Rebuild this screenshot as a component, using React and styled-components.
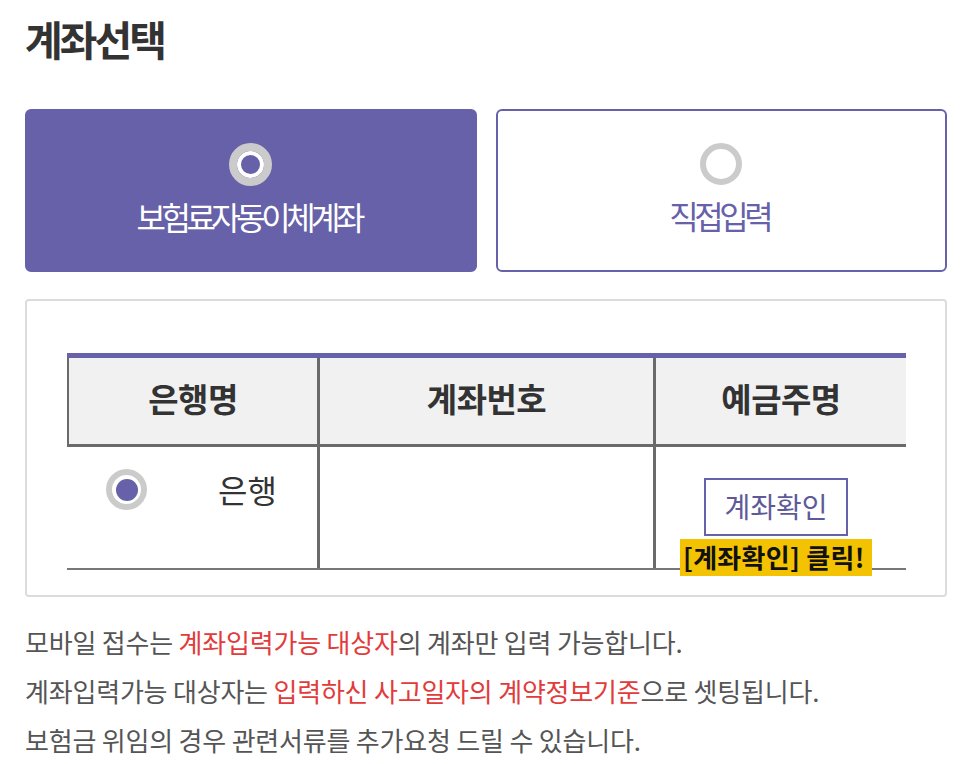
import React from "react";
import styled, { createGlobalStyle } from "styled-components";

const PURPLE = "#6661a8";
const FONT = `"Noto Sans CJK KR", "Noto Sans", sans-serif`;

const Global = createGlobalStyle`
  html, body { margin: 0; padding: 0; background: #fff; }
  body { font-family: ${FONT}; }
  * { box-sizing: border-box; }
`;

const Page = styled.div`
  width: 961px;
  height: 764px;
  padding: 13px 14px 0 25px;
  overflow: hidden;
`;

const Title = styled.h2`
  margin: 0;
  font-size: 41px;
  line-height: 51px;
  font-weight: 700;
  letter-spacing: -3px;
  color: #333;
`;

const CardRow = styled.div`
  display: flex;
  gap: 19px;
  margin-top: 45px;
`;

const Card = styled.div`
  width: 452px;
  height: 163px;
  border-radius: 6px;
  background: ${(p) => (p.$active ? PURPLE : "#fff")};
  border: 2px solid ${PURPLE};
  display: flex;
  flex-direction: column;
  align-items: center;
  padding-top: 32px;
  color: ${(p) => (p.$active ? "#fff" : PURPLE)};
`;

const CardLabel = styled.div`
  margin-top: 9px;
  font-size: 32px;
  line-height: 42px;
  letter-spacing: -4.5px;
  padding-right: 4px;
`;

const Radio = styled.span`
  display: inline-flex;
  align-items: center;
  justify-content: center;
  flex: none;
  width: ${(p) => p.$size}px;
  height: ${(p) => p.$size}px;
  border-radius: 50%;
  border: ${(p) => p.$ring}px solid #cbcbcb;
  background: ${(p) => (p.$hollow ? PURPLE : "#fff")};
  box-shadow: ${(p) => (p.$hollow ? "inset 0 0 0 4px #fff" : "none")};
  &::after {
    content: "";
    display: ${(p) => (p.$dot ? "block" : "none")};
    width: ${(p) => p.$dot}px;
    height: ${(p) => p.$dot}px;
    border-radius: 50%;
    background: ${PURPLE};
  }
`;

const Box = styled.div`
  margin-top: 27px;
  width: 922px;
  height: 298px;
  border: 2px solid #dcdcdc;
  border-radius: 4px;
  padding: 52px 39px 0 40px;
`;

const Grid = styled.div`
  display: grid;
  grid-template-columns: 253px 336px 250px;
`;

const HeadRow = styled(Grid)`
  border-top: 5px solid ${PURPLE};
  border-bottom: 3px solid #6a6a6a;
  background: #f1f1f1;
  height: 94px;
`;

const HeadCell = styled.div`
  display: flex;
  align-items: center;
  justify-content: center;
  font-size: 33px;
  font-weight: 700;
  letter-spacing: -0.5px;
  color: #333;
  padding-bottom: 6px;
  border-right: ${(p) => (p.$last ? "none" : "3px solid #6a6a6a")};
  border-left: ${(p) => (p.$first ? "2px solid #6a6a6a" : "none")};
`;

const BodyRow = styled(Grid)`
  border-bottom: 2px solid #777;
  height: 123px;
`;

const BodyCell = styled.div`
  position: relative;
  border-right: ${(p) => (p.$last ? "none" : "3px solid #6a6a6a")};
`;

const BankCell = styled(BodyCell)`
  display: flex;
  align-items: flex-start;
  padding: 22px 0 0 39px;
`;

const BankName = styled.span`
  margin-left: 71px;
  font-size: 32px;
  line-height: 40px;
  color: #333;
  letter-spacing: 0;
`;

const OwnerCell = styled(BodyCell)`
  display: flex;
  justify-content: center;
  padding-top: 31px;
  padding-right: 10px;
`;

const CheckButton = styled.button`
  width: 144px;
  height: 58px;
  border: 2px solid ${PURPLE};
  background: #fff;
  color: #5e5a98;
  font-family: ${FONT};
  font-size: 28px;
  letter-spacing: 0;
  padding: 0 0 3px;
  cursor: pointer;
`;

const Hint = styled.span`
  position: absolute;
  top: 92px;
  left: 24px;
  width: 192px;
  height: 37px;
  padding: 0 3px;
  background: #f3c200;
  color: #111;
  font-size: 26px;
  font-weight: 700;
  line-height: 35px;
  letter-spacing: 0.3px;
  white-space: nowrap;
`;

const Notes = styled.div`
  margin-top: 20px;
  font-size: 26px;
  line-height: 49px;
  letter-spacing: -0.2px;
  color: #555;
`;

const Red = styled.span`
  color: #e23b3b;
`;

export default function App() {
  return (
    <>
      <Global />
      <Page>
        <Title>계좌선택</Title>
        <CardRow>
          <Card $active>
            <Radio $size={43} $ring={8} $dot={0} $hollow />
            <CardLabel>보험료자동이체계좌</CardLabel>
          </Card>
          <Card>
            <Radio $size={42} $ring={6} $dot={0} />
            <CardLabel>직접입력</CardLabel>
          </Card>
        </CardRow>
        <Box>
          <HeadRow>
            <HeadCell $first>은행명</HeadCell>
            <HeadCell>계좌번호</HeadCell>
            <HeadCell $last>예금주명</HeadCell>
          </HeadRow>
          <BodyRow>
            <BankCell>
              <Radio $size={41} $ring={6} $dot={22} />
              <BankName>은행</BankName>
            </BankCell>
            <BodyCell />
            <OwnerCell $last>
              <CheckButton>계좌확인</CheckButton>
              <Hint>[계좌확인] 클릭!</Hint>
            </OwnerCell>
          </BodyRow>
        </Box>
        <Notes>
          <div>
            모바일 접수는 <Red>계좌입력가능 대상자</Red>의 계좌만 입력 가능합니다.
          </div>
          <div>
            계좌입력가능 대상자는 <Red>입력하신 사고일자의 계약정보기준</Red>으로 셋팅됩니다.
          </div>
          <div>보험금 위임의 경우 관련서류를 추가요청 드릴 수 있습니다.</div>
        </Notes>
      </Page>
    </>
  );
}
